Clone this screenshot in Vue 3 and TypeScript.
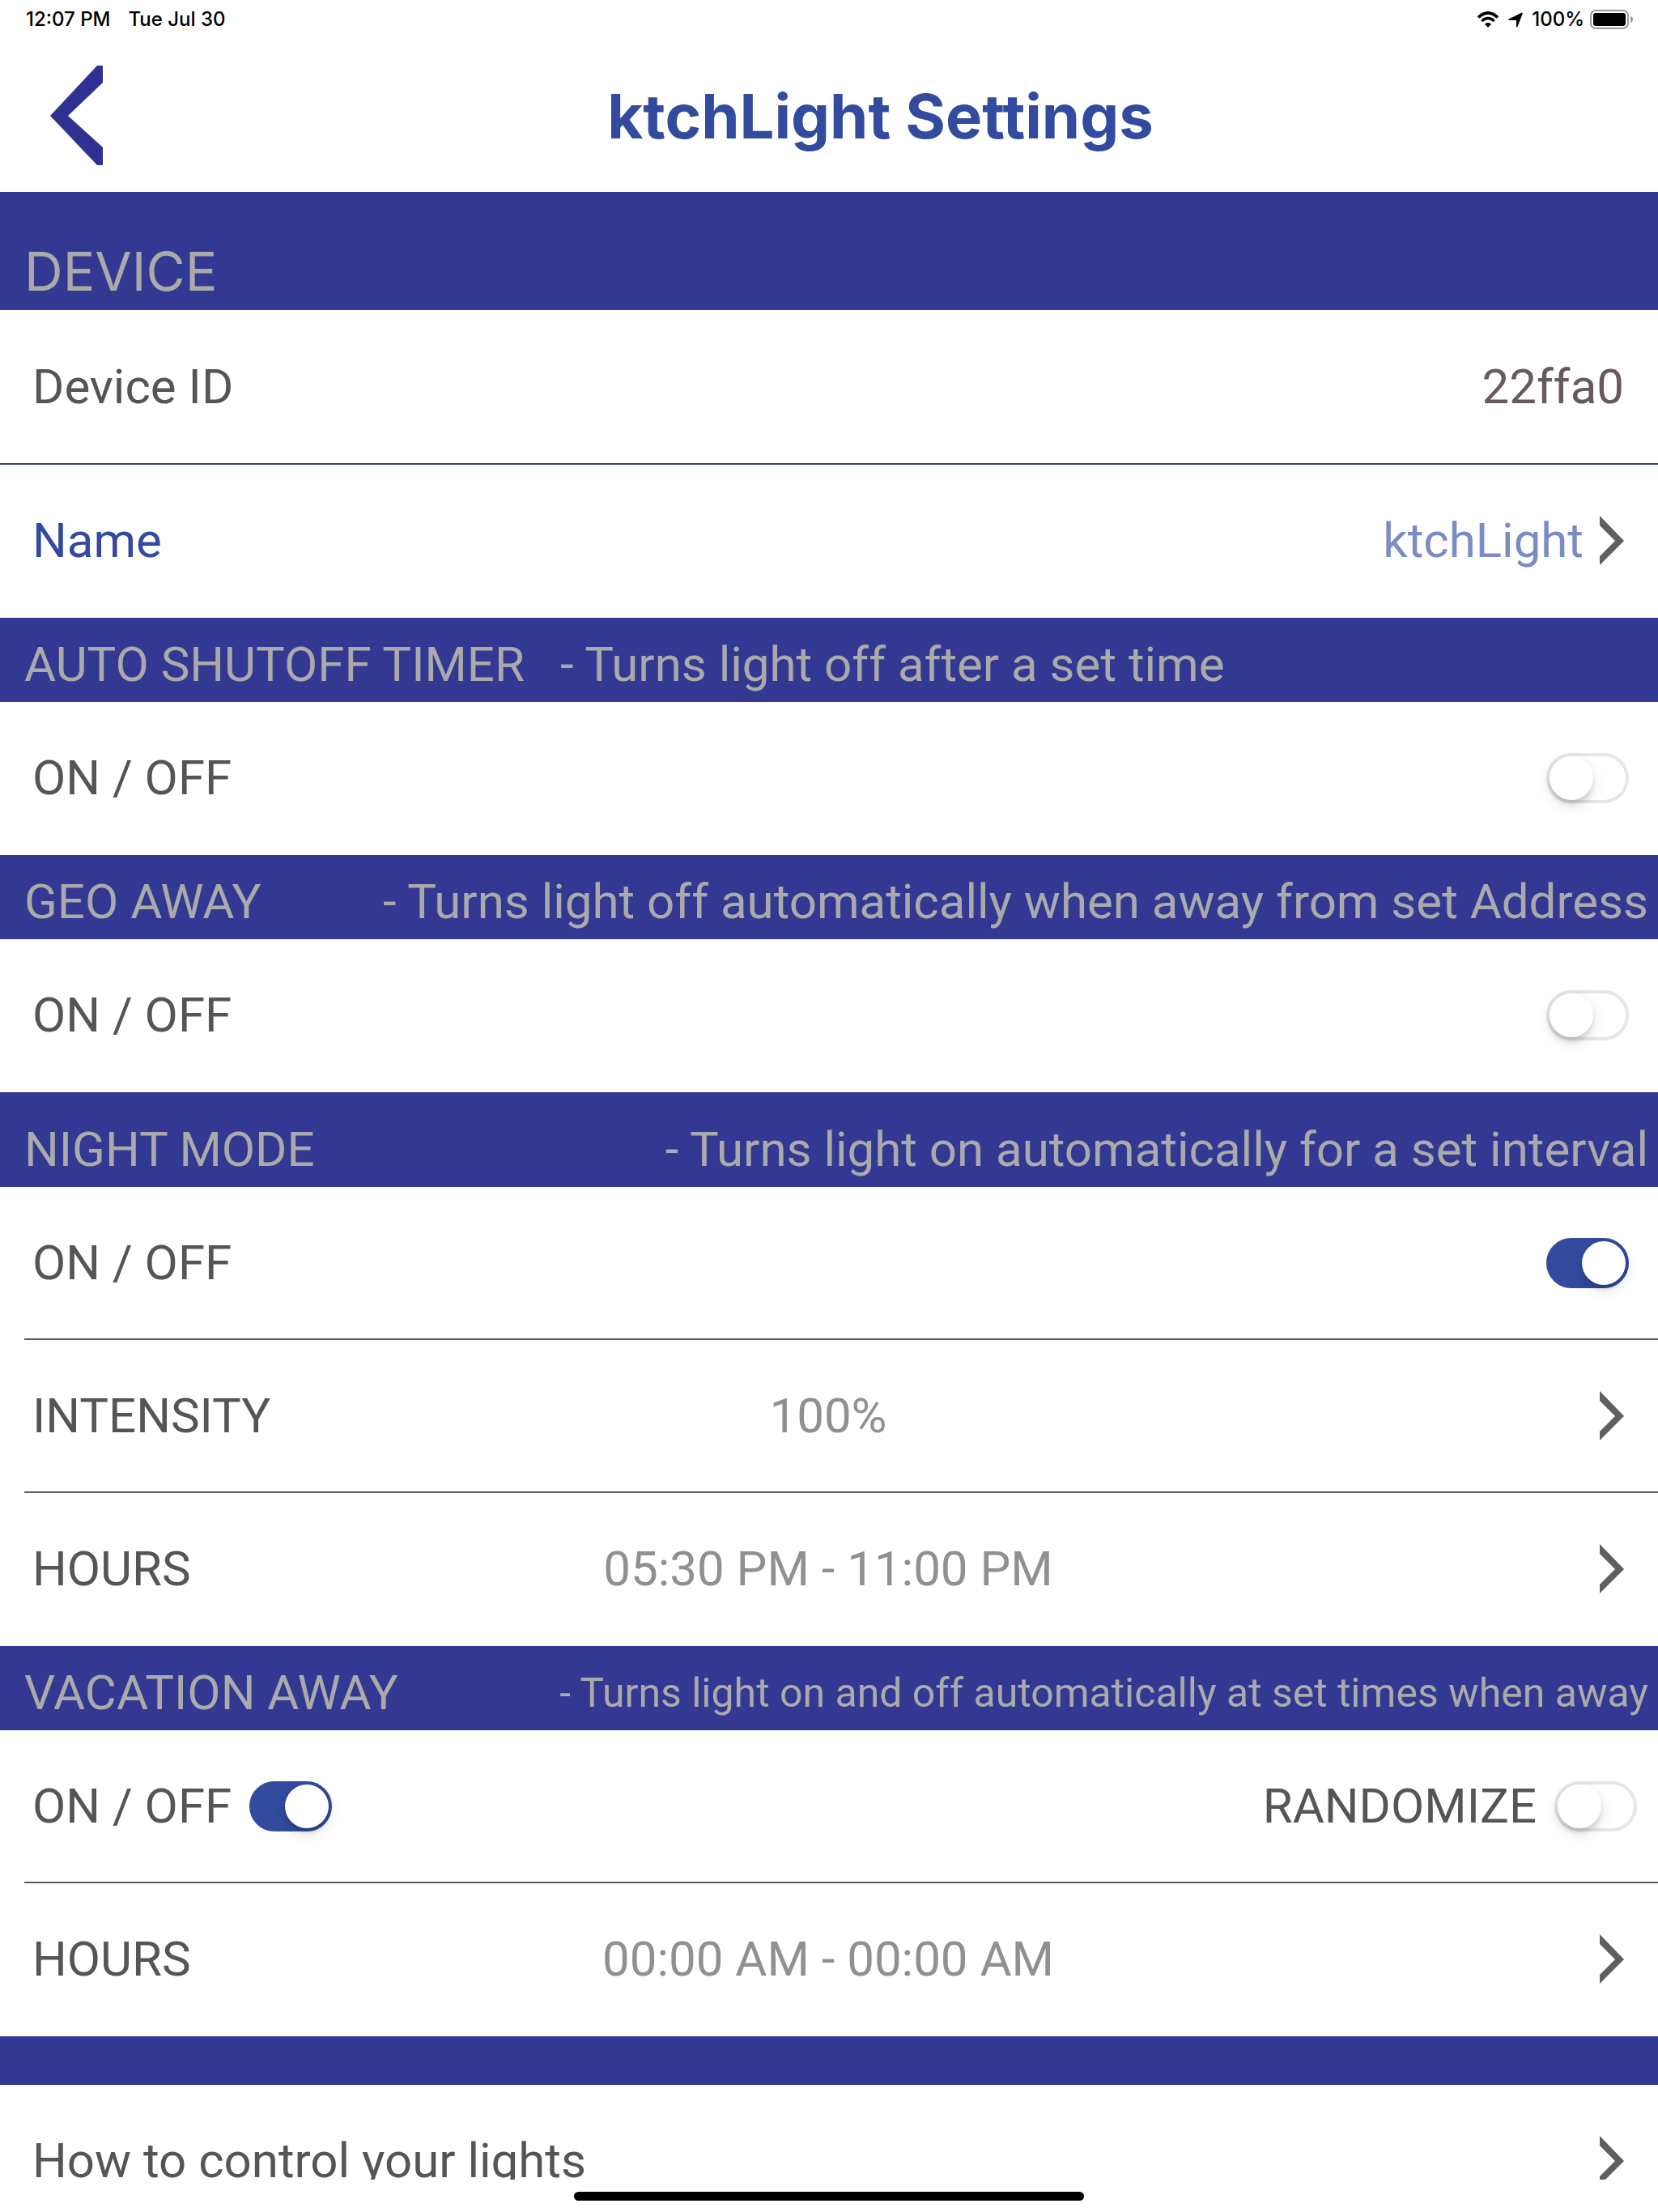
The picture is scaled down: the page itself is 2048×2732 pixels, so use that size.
<script setup lang="ts">
import { reactive } from 'vue'

interface Setting {
  kind: 'toggle' | 'value'
  label: string
  key?: 'autoShutoff' | 'geoAway' | 'nightMode'
  value?: string
}

interface Section {
  title: string
  note: string
  variant: string
  rows: Setting[]
}

const state = reactive({
  autoShutoff: false,
  geoAway: false,
  nightMode: true,
  vacation: true,
  randomize: false,
})

const sections: Section[] = [
  {
    title: 'AUTO SHUTOFF TIMER',
    note: '- Turns light off after a set time',
    variant: 'band-start',
    rows: [{ kind: 'toggle', label: 'ON / OFF', key: 'autoShutoff' }],
  },
  {
    title: 'GEO AWAY',
    note: '- Turns light off automatically when away from set Address',
    variant: '',
    rows: [{ kind: 'toggle', label: 'ON / OFF', key: 'geoAway' }],
  },
  {
    title: 'NIGHT MODE',
    note: '- Turns light on automatically for a set interval',
    variant: 'band-tall',
    rows: [
      { kind: 'toggle', label: 'ON / OFF', key: 'nightMode' },
      { kind: 'value', label: 'INTENSITY', value: '100%' },
      { kind: 'value', label: 'HOURS', value: '05:30 PM - 11:00 PM' },
    ],
  },
]

const chevron = '0,1 30,32 0,62 0,51 19,32 0,13'
</script>

<template>
  <div class="screen">
    <div class="status">
      <span>12:07 PM</span>
      <span class="date">Tue Jul 30</span>
      <svg class="wifi" viewBox="0 0 28 20" aria-hidden="true">
        <path d="M2 7.500Q14-3.500 26 7.500" fill="none" stroke="#000" stroke-width="3.600" />
        <path d="M6.300 12Q14 5 21.700 12" fill="none" stroke="#000" stroke-width="3.400" />
        <path d="M10 15.800Q14 12.300 18 15.800L14 20Z" />
      </svg>
      <svg class="location" viewBox="0 0 18 19" aria-hidden="true">
        <path d="M17 .5Q18 .3 17.800 1.500L11.500 18Q10.500 19.500 10 18V10H1Q-.8 9.500 .8 8.400Z" />
      </svg>
      <span>100%</span>
      <svg class="battery" viewBox="0 0 54 24" aria-hidden="true">
        <rect x="1" y="1" width="46" height="22" rx="6" fill="none" stroke="#9a9a9a" stroke-width="2" />
        <rect x="4" y="4" width="40" height="16" rx="3" />
        <path d="M50 8Q53 9 53 12T50 16Z" fill="#9a9a9a" />
      </svg>
    </div>

    <header class="header">
      <button class="back" type="button" aria-label="Back">
        <svg viewBox="0 0 65 127" aria-hidden="true">
          <polygon points="58,2 65,2 65,23 22,64 65,103 65,125 58,125 0,64" />
        </svg>
      </button>
      <h1>ktchLight Settings</h1>
    </header>

    <main class="content">
      <section>
        <div class="band band-device"><h2>DEVICE</h2></div>
        <div class="row row-id">
          <span>Device ID</span>
          <span class="device-id">22ffa0</span>
        </div>
        <button class="row row-name" type="button">
          <span>Name</span>
          <span class="trail">
            <span class="name">ktchLight</span>
            <svg class="chevron" viewBox="0 0 30 63" aria-hidden="true"><polygon :points="chevron" /></svg>
          </span>
        </button>
      </section>

      <section v-for="section in sections" :key="section.title">
        <div class="band" :class="section.variant">
          <h2>{{ section.title }}</h2>
          <p>{{ section.note }}</p>
        </div>
        <template v-for="item in section.rows" :key="item.label">
          <label v-if="item.kind === 'toggle'" class="row row-toggle">
            <span>{{ item.label }}</span>
            <input v-model="state[item.key!]" class="switch" type="checkbox" role="switch" />
          </label>
          <button v-else class="row" type="button">
            <span class="side">{{ item.label }}</span>
            <span class="value">{{ item.value }}</span>
            <span class="side trail">
              <svg class="chevron" viewBox="0 0 30 63" aria-hidden="true"><polygon :points="chevron" /></svg>
            </span>
          </button>
        </template>
      </section>

      <section>
        <div class="band band-small">
          <h2>VACATION AWAY</h2>
          <p>- Turns light on and off automatically at set times when away</p>
        </div>
        <div class="row row-pair">
          <label>ON / OFF <input v-model="state.vacation" class="switch" type="checkbox" role="switch" /></label>
          <label>RANDOMIZE <input v-model="state.randomize" class="switch" type="checkbox" role="switch" /></label>
        </div>
        <button class="row" type="button">
          <span class="side">HOURS</span>
          <span class="value">00:00 AM - 00:00 AM</span>
          <span class="side trail">
            <svg class="chevron" viewBox="0 0 30 63" aria-hidden="true"><polygon :points="chevron" /></svg>
          </span>
        </button>
      </section>

      <section>
        <div class="band band-empty"></div>
        <button class="row" type="button">
          <span>How to control your lights</span>
          <svg class="chevron" viewBox="0 0 30 63" aria-hidden="true"><polygon :points="chevron" /></svg>
        </button>
      </section>
    </main>

    <footer class="home"><div class="home-bar"></div></footer>
  </div>
</template>

<style>
body {
  margin: 0;
  background: #fff;
}
</style>

<style scoped>
.screen {
  display: flex;
  flex-direction: column;
  height: 100vh;
  overflow: hidden;
  background: #fff;
  color: #555;
  font-family: Roboto, sans-serif;
  font-size: 60px;
  line-height: 70px;
}

.status {
  display: flex;
  flex: none;
  align-items: center;
  height: 48px;
  box-sizing: border-box;
  padding: 0 30px 0 32px;
  color: #000;
  font: 500 24px/48px Inter, sans-serif;
}
.date {
  margin-left: 22px;
}
.wifi {
  width: 28px;
  height: 20px;
  margin-left: auto;
}
.location {
  width: 18px;
  height: 19px;
  margin: 0 11px;
}
.battery {
  width: 54px;
  height: 24px;
  margin-left: 7px;
}

.header {
  display: flex;
  flex: none;
  align-items: center;
  height: 189px;
}
.back {
  display: flex;
  flex: none;
  width: 127px;
  padding: 0 0 0 62px;
  border: 0;
  background: none;
}
.back svg {
  width: 65px;
  height: 127px;
  fill: #2e3192;
}
h1 {
  flex: 1;
  margin: 0;
  color: #324b9f;
  font: 700 76px/92px Inter, sans-serif;
  text-align: center;
}

.content {
  flex: 1;
  min-height: 0;
  overflow: hidden;
}

.band {
  display: flex;
  align-items: flex-end;
  justify-content: space-between;
  box-sizing: border-box;
  height: 104px;
  padding: 0 12px 11px 30px;
  background: #333892;
  color: #aaa;
  white-space: nowrap;
}
.band h2,
.band p {
  margin: 0;
  font-size: 60px;
  font-weight: 400;
}
.band-start {
  justify-content: flex-start;
}
.band-start h2 {
  flex: 0 0 33%;
}
.band-tall {
  height: 117px;
}
.band-small p {
  font-size: 50px;
}
.band-device {
  height: 146px;
}
.band-device h2 {
  font: 400 66px/74px Inter, sans-serif;
}
.band-empty {
  height: 60px;
}

.row {
  display: flex;
  align-items: center;
  justify-content: space-between;
  box-sizing: border-box;
  width: calc(100% - 30px);
  height: 189px;
  margin: 0 0 0 30px;
  padding: 0 42px 0 10px;
  border: 0;
  border-bottom: 2px solid #5a5a5a;
  border-radius: 0;
  background: none;
  color: inherit;
  font: inherit;
  text-align: left;
  white-space: nowrap;
}
.row:last-child {
  border-bottom-color: transparent;
}
.row-id,
.row-name {
  width: 100%;
  margin-left: 0;
  padding-left: 40px;
}
.row-id {
  height: 191px;
  border-bottom-color: #333892;
}
.row-name {
  color: #324b9f;
}
.row-toggle {
  padding-right: 36px;
}
.row-pair {
  padding-right: 26px;
}
.row-pair label {
  display: flex;
  align-items: center;
  gap: 22px;
}
.side {
  flex: 1;
}
.value {
  color: #909090;
}
.trail {
  display: flex;
  align-items: center;
  justify-content: flex-end;
  gap: 20px;
}
.name {
  color: #7b8bc3;
}
.device-id {
  color: #665a60;
}
.chevron {
  width: 30px;
  height: 63px;
  fill: #5f5f5f;
}

.switch {
  appearance: none;
  flex: none;
  box-sizing: border-box;
  width: 102px;
  height: 62px;
  margin: 0;
  border: 4px solid #e6e6e6;
  border-radius: 31px;
  background: #fff;
}
.switch::before {
  content: '';
  display: block;
  width: 54px;
  height: 54px;
  border-radius: 50%;
  background: #fff;
  box-shadow: 0 6px 16px rgba(0, 0, 0, 0.15), 0 6px 4px rgba(0, 0, 0, 0.08);
}
.switch:checked {
  border-color: #324b9f;
  background: #324b9f;
}
.switch:checked::before {
  margin-left: 40px;
}

.home {
  display: flex;
  flex: none;
  align-items: center;
  justify-content: center;
  box-sizing: border-box;
  height: 40px;
}
.home-bar {
  width: 630px;
  height: 11px;
  border-radius: 6px;
  background: #000;
}
</style>
